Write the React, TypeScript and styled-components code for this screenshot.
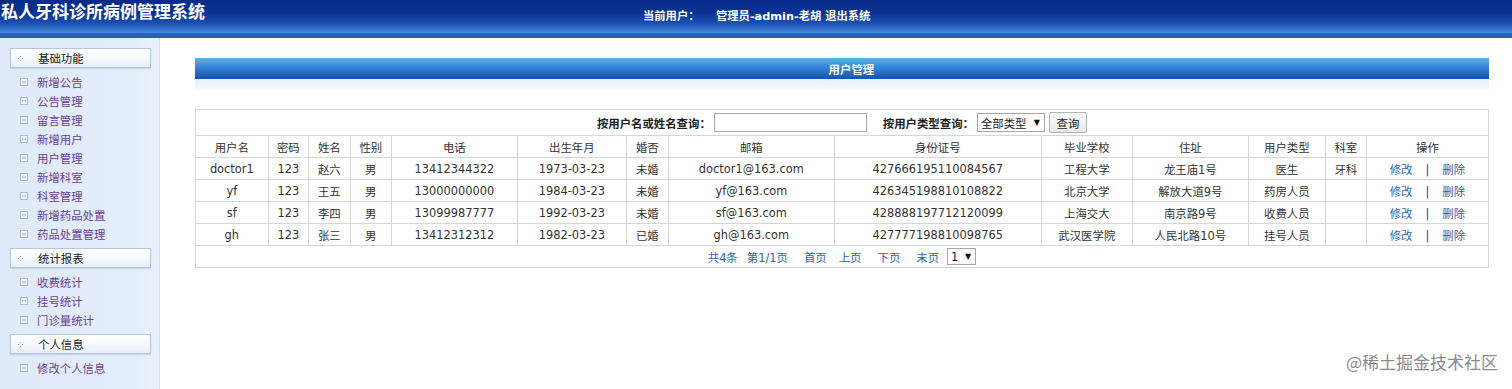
import React from 'react';
import styled, { createGlobalStyle } from 'styled-components';

const GlobalStyle = createGlobalStyle`
  html, body { margin: 0; padding: 0; background: #ffffff; }
  body {
    font-family: "DejaVu Sans", "Noto Sans CJK SC", sans-serif;
    font-size: 11.4px;
    color: #333333;
  }
`;

const Page = styled.div`
  display: flex;
  flex-direction: column;
  min-height: 389px;
  position: relative;
  overflow: hidden;
`;

const Header = styled.header`
  height: 38px;
  display: flex;
  align-items: flex-start;
  color: #ffffff;
  background: linear-gradient(
    to bottom,
    #082a88 0%,
    #0b3395 35%,
    #1a4fb0 60%,
    #3a7bd2 80%,
    #4a8adb 86%,
    #2b64b3 88%,
    #2a5ea9 100%
  );
`;

const Title = styled.h1`
  flex: 0 0 642px;
  margin: 0;
  padding-left: 1px;
  font-family: "Noto Sans CJK SC", sans-serif;
  font-size: 17px;
  font-weight: bold;
  line-height: 22px;
  white-space: nowrap;
`;

const UserInfo = styled.div`
  padding-top: 10px;
  display: flex;
  font-family: "DejaVu Sans", "Noto Sans CJK SC", sans-serif;
  font-size: 11.3px;
  font-weight: bold;
  line-height: 14px;
  white-space: nowrap;
`;

const UserLabel = styled.span`
  width: 73px;
`;

const Body = styled.div`
  flex: 1;
  display: flex;
`;

const Sidebar = styled.nav`
  width: 160px;
  border-right: 1px solid #d3def0;
  background: linear-gradient(to right, #dfeaf9 0%, #e4eefb 85%, #e9f1fc 100%);
  padding-top: 10px;
`;

const GroupHeader = styled.div`
  margin: 0 8px 0 10px;
  height: 18px;
  display: flex;
  align-items: center;
  gap: 15px;
  padding-left: 7px;
  border: 1px solid #b7c6da;
  background: linear-gradient(to bottom, #ffffff 0%, #f6f9fd 50%, #e8eef7 100%);
  box-shadow: 0 1px 1px rgba(120, 140, 170, 0.25);
  color: #222222;
  font-size: 11.4px;
`;

const ItemList = styled.ul`
  list-style: none;
  margin: 0;
  padding: 4px 0 5px;
`;

const Item = styled.li`
  height: 19px;
  display: flex;
  align-items: center;
  gap: 9px;
  padding-left: 20px;
  color: #6a3f96;
  font-size: 11.4px;
  white-space: nowrap;
`;

const Main = styled.main`
  flex: 1;
  padding: 20px 23px 0 35px;
`;

const PanelBar = styled.div`
  height: 21px;
  display: flex;
  align-items: center;
  justify-content: center;
  padding-left: 19px;
  color: #ffffff;
  font-weight: bold;
  font-size: 11.4px;
  background: linear-gradient(to bottom, #5cb3ef 0%, #3d8ddb 35%, #2a6fc8 65%, #1653ad 100%);
`;

const PanelShade = styled.div`
  height: 11px;
  background: linear-gradient(to bottom, #ebf1fa 0%, #eff4fb 70%, #f7f9fd 100%);
  margin-bottom: 19px;
`;

const Table = styled.table`
  width: 1293px;
  table-layout: fixed;
  border-collapse: collapse;
  border: 1px solid #d2d2d2;
`;

const Cell = styled.td`
  border: 1px solid #d6d6d6;
  height: 21px;
  padding: 0;
  text-align: center;
  white-space: nowrap;
  color: #333333;
`;

const HeadCell = styled.th`
  border: 1px solid #d6d6d6;
  height: 21px;
  padding: 0;
  font-weight: normal;
  text-align: center;
  white-space: nowrap;
  color: #333333;
`;

const SearchCell = styled.td`
  border: 1px solid #d6d6d6;
  height: 25px;
  padding: 0;
`;

const SearchBar = styled.form`
  display: flex;
  align-items: center;
  justify-content: center;
  margin: 0;
`;

const SearchLabel = styled.label<{ $gap?: number }>`
  font-weight: bold;
  color: #222222;
  margin-left: ${(p) => p.$gap ?? 0}px;
  margin-right: 3px;
`;

const TextInput = styled.input`
  width: 153px;
  height: 19px;
  box-sizing: border-box;
  border: 1px solid #a9a9a9;
  padding: 0 3px;
  font-size: 11.4px;
  background: #ffffff;
`;

const FakeSelect = styled.span<{ $w: number; $h: number; $gap?: number }>`
  display: inline-flex;
  align-items: center;
  justify-content: space-between;
  box-sizing: border-box;
  width: ${(p) => p.$w}px;
  height: ${(p) => p.$h}px;
  margin-left: ${(p) => p.$gap ?? 0}px;
  padding: 0 4px 0 3px;
  border: 1px solid #a6a6a6;
  background: #ffffff;
  color: #222222;
  font-size: 11.4px;
`;

const Arrow = styled.span`
  font-size: 8px;
  color: #111111;
`;

const QueryButton = styled.button`
  margin-left: 4px;
  width: 38px;
  height: 21px;
  padding: 0;
  border: 1px solid #b3b3b3;
  border-radius: 2px;
  background: linear-gradient(to bottom, #fafafa, #e8e8e8);
  color: #222222;
  font-family: "DejaVu Sans", "Noto Sans CJK SC", sans-serif;
  font-size: 11.4px;
`;

const Link = styled.a<{ $gap?: number }>`
  color: #2f63b0;
  text-decoration: none;
  margin-left: ${(p) => p.$gap ?? 0}px;
`;

const Sep = styled.span`
  color: #1c3f8c;
  margin: 0 13px;
`;

const Pager = styled.div`
  display: flex;
  align-items: center;
  justify-content: center;
`;

const Watermark = styled.div`
  position: absolute;
  right: 14px;
  bottom: 17px;
  font-family: "Noto Sans CJK SC", sans-serif;
  font-size: 17px;
  color: #8a8a8a;
  text-shadow: 0 0 2px #ffffff;
  line-height: 20px;
  pointer-events: none;
`;

const ItemIcon = () => (
  <svg width="8" height="8" viewBox="0 0 8 8">
    <rect x="0.5" y="0.5" width="7" height="7" fill="#f3f7fc" stroke="#a9b9cf" />
    <rect x="2" y="3.5" width="1" height="1" fill="#7f8fa6" />
    <rect x="3.5" y="3.5" width="1" height="1" fill="#7f8fa6" />
    <rect x="5" y="3.5" width="1" height="1" fill="#7f8fa6" />
  </svg>
);

const GroupIcon = () => (
  <svg width="5" height="5" viewBox="0 0 5 5">
    <rect x="2" y="0" width="1" height="1" fill="#9aa8bc" />
    <rect x="0" y="2" width="1" height="1" fill="#9aa8bc" />
    <rect x="4" y="2" width="1" height="1" fill="#9aa8bc" />
    <rect x="2" y="4" width="1" height="1" fill="#9aa8bc" />
  </svg>
);

const menu = [
  {
    title: '基础功能',
    items: ['新增公告', '公告管理', '留言管理', '新增用户', '用户管理', '新增科室', '科室管理', '新增药品处置', '药品处置管理'],
  },
  { title: '统计报表', items: ['收费统计', '挂号统计', '门诊量统计'] },
  { title: '个人信息', items: ['修改个人信息'] },
];

const colWidths = [73, 40, 42, 41, 126, 109, 42, 166, 207, 91, 116, 77, 41, 122];
const heads = ['用户名', '密码', '姓名', '性别', '电话', '出生年月', '婚否', '邮箱', '身份证号', '毕业学校', '住址', '用户类型', '科室', '操作'];

const rows = [
  ['doctor1', '123', '赵六', '男', '13412344322', '1973-03-23', '未婚', 'doctor1@163.com', '427666195110084567', '工程大学', '龙王庙1号', '医生', '牙科'],
  ['yf', '123', '王五', '男', '13000000000', '1984-03-23', '未婚', 'yf@163.com', '426345198810108822', '北京大学', '解放大道9号', '药房人员', ''],
  ['sf', '123', '李四', '男', '13099987777', '1992-03-23', '未婚', 'sf@163.com', '428888197712120099', '上海交大', '南京路9号', '收费人员', ''],
  ['gh', '123', '张三', '男', '13412312312', '1982-03-23', '已婚', 'gh@163.com', '427777198810098765', '武汉医学院', '人民北路10号', '挂号人员', ''],
];

export default function App() {
  return (
    <Page>
      <GlobalStyle />
      <Header>
        <Title>私人牙科诊所病例管理系统</Title>
        <UserInfo>
          <UserLabel>当前用户：</UserLabel>
          <span>管理员-admin-老胡 退出系统</span>
        </UserInfo>
      </Header>
      <Body>
        <Sidebar>
          {menu.map((g) => (
            <div key={g.title}>
              <GroupHeader>
                <GroupIcon />
                <span>{g.title}</span>
              </GroupHeader>
              <ItemList>
                {g.items.map((it) => (
                  <Item key={it}>
                    <ItemIcon />
                    <span>{it}</span>
                  </Item>
                ))}
              </ItemList>
            </div>
          ))}
        </Sidebar>
        <Main>
          <PanelBar>用户管理</PanelBar>
          <PanelShade />
          <Table>
            <colgroup>
              {colWidths.map((w, i) => (
                <col key={i} style={{ width: w }} />
              ))}
            </colgroup>
            <tbody>
              <tr>
                <SearchCell colSpan={14}>
                  <SearchBar onSubmit={(e) => e.preventDefault()}>
                    <SearchLabel>按用户名或姓名查询：</SearchLabel>
                    <TextInput type="text" />
                    <SearchLabel $gap={16}>按用户类型查询：</SearchLabel>
                    <FakeSelect $w={68} $h={19}>
                      <span>全部类型</span>
                      <Arrow>▼</Arrow>
                    </FakeSelect>
                    <QueryButton type="button">查询</QueryButton>
                  </SearchBar>
                </SearchCell>
              </tr>
              <tr>
                {heads.map((h) => (
                  <HeadCell key={h}>{h}</HeadCell>
                ))}
              </tr>
              {rows.map((r) => (
                <tr key={r[0]}>
                  {r.map((c, i) => (
                    <Cell key={i}>{c}</Cell>
                  ))}
                  <Cell>
                    <Link href="#">修改</Link>
                    <Sep>|</Sep>
                    <Link href="#">删除</Link>
                  </Cell>
                </tr>
              ))}
              <tr>
                <Cell colSpan={14}>
                  <Pager>
                    <Link>共4条</Link>
                    <Link $gap={9}>第1/1页</Link>
                    <Link $gap={16} href="#">首页</Link>
                    <Link $gap={12} href="#">上页</Link>
                    <Link $gap={16} href="#">下页</Link>
                    <Link $gap={16} href="#">末页</Link>
                    <FakeSelect $w={29} $h={17} $gap={8}>
                      <span>1</span>
                      <Arrow>▼</Arrow>
                    </FakeSelect>
                  </Pager>
                </Cell>
              </tr>
            </tbody>
          </Table>
        </Main>
      </Body>
      <Watermark>@稀土掘金技术社区</Watermark>
    </Page>
  );
}
